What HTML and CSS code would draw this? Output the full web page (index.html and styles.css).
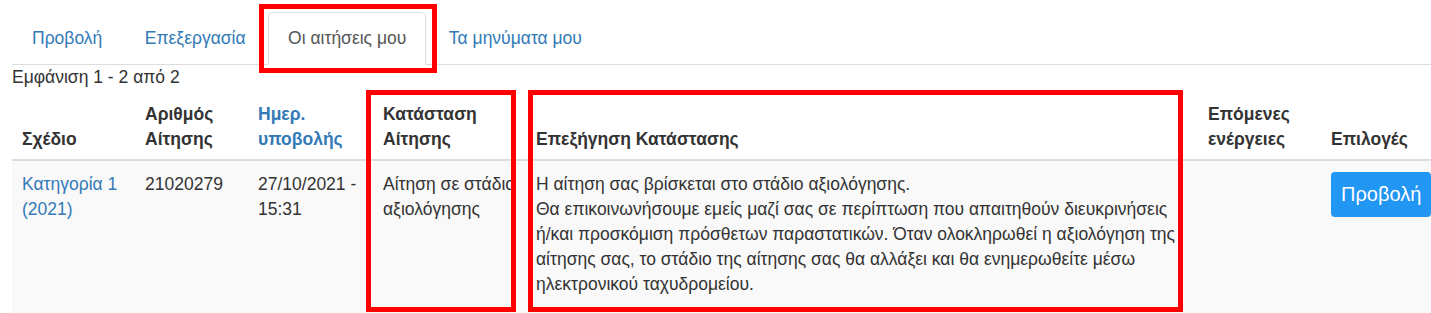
FILE: index.html
```html
<!DOCTYPE html>
<html lang="el">
<head>
    <meta charset="UTF-8">
    <meta name="viewport" content="width=device-width, initial-scale=1.0">
    <title>Οι αιτήσεις μου</title>
    <link rel="stylesheet" href="styles.css">
</head>
<body>
    <ul class="nav-tabs">
        <li><a href="#">Προβολή</a></li>
        <li><a href="#">Επεξεργασία</a></li>
        <li class="active"><a href="#">Οι αιτήσεις μου</a></li>
        <li><a href="#">Τα μηνύματα μου</a></li>
    </ul>

    <div class="summary">Εμφάνιση 1 - 2 από 2</div>

    <table class="grid">
        <colgroup>
            <col class="c-plan">
            <col class="c-num">
            <col class="c-date">
            <col class="c-status">
            <col class="c-expl">
            <col class="c-next">
            <col class="c-opts">
        </colgroup>
        <thead>
            <tr>
                <th>Σχέδιο</th>
                <th>Αριθμός Αίτησης</th>
                <th><a href="#">Ημερ. υποβολής</a></th>
                <th>Κατάσταση Αίτησης</th>
                <th>Επεξήγηση Κατάστασης</th>
                <th>Επόμενες ενέργειες</th>
                <th>Επιλογές</th>
            </tr>
        </thead>
        <tbody>
            <tr>
                <td><a href="#">Κατηγορία 1 (2021)</a></td>
                <td>21020279</td>
                <td>27/10/2021 - 15:31</td>
                <td>Αίτηση σε στάδιο αξιολόγησης</td>
                <td>Η αίτηση σας βρίσκεται στο στάδιο αξιολόγησης.<br>Θα επικοινωνήσουμε εμείς μαζί σας σε περίπτωση που απαιτηθούν διευκρινήσεις <span class="nw">ή/και</span> προσκόμιση πρόσθετων παραστατικών. Όταν ολοκληρωθεί η αξιολόγηση της αίτησης σας, το στάδιο της αίτησης σας θα αλλάξει και θα ενημερωθείτε μέσω ηλεκτρονικού ταχυδρομείου.</td>
                <td></td>
                <td><a href="#" class="btn">Προβολή</a></td>
            </tr>
        </tbody>
    </table>

    <!-- σημάνσεις πάνω από το στιγμιότυπο -->
    <div class="mark mark-tab"></div>
    <div class="mark mark-status"></div>
    <div class="mark mark-expl"></div>
</body>
</html>
```

FILE: styles.css
```css
html {
    overflow: hidden;
}

body {
    margin: 0;
    padding: 12px 0 0 12px;
    min-height: 313px;
    box-sizing: border-box;
    font-family: "Liberation Sans", Arial, sans-serif;
    font-size: 17.5px;
    line-height: 25px;
    color: #333;
    background: #fff;
    position: relative;
}

a {
    color: #337ab7;
    text-decoration: none;
}

.nw {
    white-space: nowrap;
}

.nav-tabs {
    display: flex;
    margin: 0;
    padding: 0;
    list-style: none;
    border-bottom: 1px solid #ddd;
}

.nav-tabs li {
    margin-right: 2.5px;
    margin-bottom: -1px;
}

.nav-tabs a {
    display: block;
    padding: 13px 19px;
    border: 1px solid transparent;
    border-radius: 5px 5px 0 0;
}

.nav-tabs .active a {
    color: #555;
    background: #fff;
    border-color: #ddd #ddd transparent;
}

.summary {
    margin: 0;
}

.grid {
    width: 1439px;
    table-layout: fixed;
    border-collapse: collapse;
    border-spacing: 0;
}

.c-plan { width: 123px; }
.c-num { width: 113px; }
.c-date { width: 125px; }
.c-status { width: 153px; }
.c-expl { width: 672px; }
.c-next { width: 123px; }
.c-opts { width: 130px; }

.grid th {
    text-align: left;
    vertical-align: bottom;
    font-weight: bold;
    padding: 12px 10px 7px;
    border-bottom: 2px solid #ddd;
}

.grid td {
    vertical-align: top;
    padding: 11px 10px 20px;
    background: #f9f9f9;
}

.btn {
    display: inline-block;
    padding: 10px 10px;
    font-size: 20px;
    line-height: 25px;
    color: #fff;
    background: #2196f3;
    border-radius: 4px;
    white-space: nowrap;
}

.mark {
    position: absolute;
    border: 5px solid #f00;
    pointer-events: none;
}

.mark-tab {
    left: 259px;
    top: 4px;
    width: 168px;
    height: 59px;
}

.mark-status {
    left: 366px;
    top: 90px;
    width: 140px;
    height: 212px;
}

.mark-expl {
    left: 528px;
    top: 90px;
    width: 645px;
    height: 212px;
}
```
